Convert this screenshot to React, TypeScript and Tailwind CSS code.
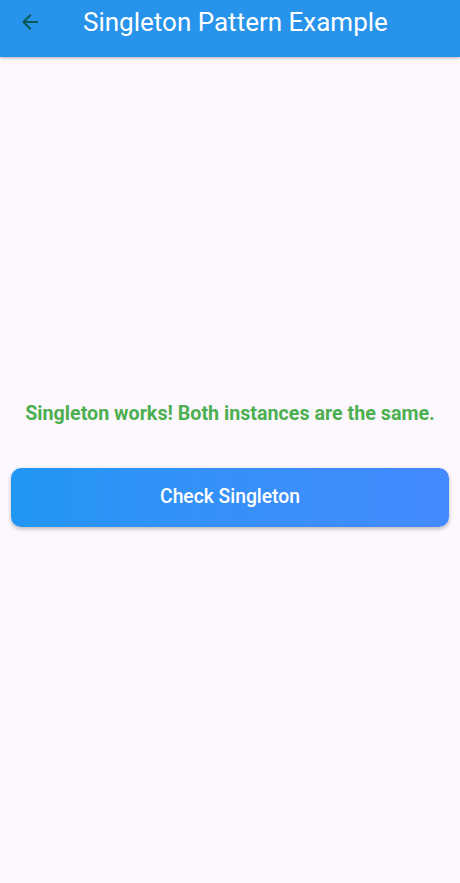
import React from 'react'

export default function App() {
  return (
    <div
      className="w-[460px] h-[883px] flex flex-col bg-[#fdf7fe]"
      style={{ fontFamily: 'Roboto, "Noto Sans", sans-serif' }}
    >
      <header className="h-[57px] pb-[13px] bg-[#2893eb] flex items-center shadow-[0_1px_3px_rgba(0,0,0,0.3)] z-10">
        <button className="w-[60px] h-[44px] flex items-center justify-center">
          <svg width="24" height="24" viewBox="0 0 24 24">
            <path
              d="M20 11H7.83l5.59-5.59L12 4l-8 8 8 8 1.41-1.41L7.83 13H20v-2z"
              fill="#0b5a52"
            />
          </svg>
        </button>
        <h1 className="ml-[23px] text-white text-[26px] leading-none">
          Singleton Pattern Example
        </h1>
      </header>
      <main className="flex-1 flex flex-col justify-center items-center px-[11px] pb-[9px]">
        <p className="text-[#4caf50] text-[19.7px] leading-none font-bold">
          Singleton works! Both instances are the same.
        </p>
        <button className="mt-[44px] w-full h-[59px] rounded-[10px] bg-gradient-to-r from-[#2196f3] to-[#448aff] text-white text-[19.3px] font-medium shadow-[0_2px_4px_rgba(0,0,0,0.25)]">
          Check Singleton
        </button>
      </main>
    </div>
  )
}
